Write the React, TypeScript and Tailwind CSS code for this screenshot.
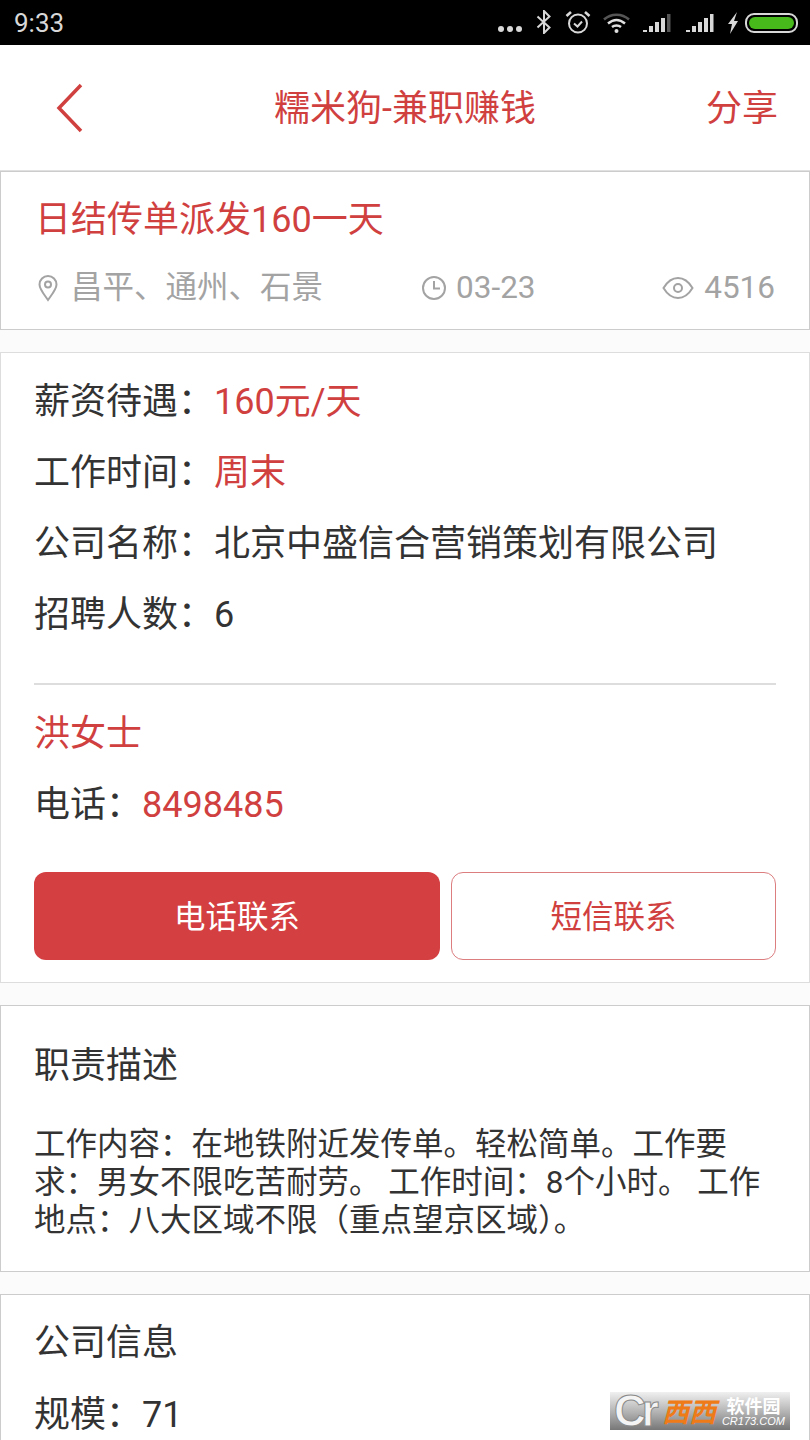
import React from "react";

function Row({ label, value, red }: { label: string; value: string; red?: boolean }) {
  return (
    <div className="h-[71px] flex items-center text-[36px] leading-none text-[#333333]">
      <span>{label}</span>
      <span className={red ? "text-[#d0403f]" : ""}>{value}</span>
    </div>
  );
}

function StatusIcons() {
  return (
    <div className="flex items-center text-white">
      <div className="flex gap-[3px] mt-[13px] mr-[14px]">
        <span className="w-[6px] h-[6px] rounded-full bg-[#d8d8d8]" />
        <span className="w-[6px] h-[6px] rounded-full bg-[#d8d8d8]" />
        <span className="w-[6px] h-[6px] rounded-full bg-[#d8d8d8]" />
      </div>
      <svg width="16" height="24" viewBox="0 0 16 24" fill="none" stroke="#d8d8d8" strokeWidth="2" className="mr-[13px] mt-[-1px]">
        <path d="M1.500 6.500l12 11L8 23V1l5.500 5.500-12 11" />
      </svg>
      <svg width="26" height="24" viewBox="0 0 26 24" fill="none" stroke="#d8d8d8" strokeWidth="2" className="mr-[12px] mt-[-1px]">
        <circle cx="13" cy="13.500" r="9" />
        <path d="M9 13.500l3.500 3 4.500-5" />
        <path d="M1.500 6L6 2M24.500 6L20 2" strokeWidth="2.600" />
      </svg>
      <svg width="27" height="20" viewBox="0 0 27 20" fill="none" className="mr-[13px]">
        <path d="M1 6.500C8 0 19 0 26 6.500" stroke="#555" strokeWidth="2.500" />
        <path d="M5 10.500C10.500 6 16.500 6 22 10.500" stroke="#e0e0e0" strokeWidth="2.500" />
        <path d="M9 14C11.500 12 15.500 12 18 14" stroke="#e0e0e0" strokeWidth="2.500" />
        <circle cx="13.500" cy="18" r="2" fill="#e0e0e0" />
      </svg>
      <svg width="28" height="20" viewBox="0 0 28 20" fill="#d8d8d8" className="mr-[15px]">
        <rect x="0" y="17" width="4" height="2" />
        <rect x="6" y="13" width="4" height="6" />
        <rect x="12" y="9" width="4" height="10" />
        <rect x="18" y="5" width="4" height="14" />
        <rect x="24" y="1" width="3.500" height="18" fill="#555" />
      </svg>
      <svg width="28" height="20" viewBox="0 0 28 20" fill="#d8d8d8" className="mr-[13px]">
        <rect x="0" y="17" width="4" height="2" />
        <rect x="6" y="13" width="4" height="6" />
        <rect x="12" y="9" width="4" height="10" />
        <rect x="18" y="5" width="4" height="14" />
        <rect x="24" y="1" width="3.500" height="18" />
      </svg>
      <svg width="12" height="22" viewBox="0 0 12 22" fill="#d8d8d8" className="mr-[6px]">
        <path d="M10 0L1 12h4L3 22l8-13H7z" />
      </svg>
      <div className="w-[53px] h-[20px] rounded-[9px] border-2 border-[#d8d8d8] p-[2px]">
        <div className="h-full rounded-[6px] bg-[#47b91a]" />
      </div>
    </div>
  );
}

function Watermark() {
  return (
    <div
      className="absolute right-[20px] bottom-[10px] w-[180px] h-[38px] flex items-center"
      style={{ background: "linear-gradient(#f0f0f0 0%, #b0b0b0 55%, #777777 100%)" }}
    >
      <span className="ml-[4px] text-[44px] leading-[38px] font-bold text-[#f4f4f4] [-webkit-text-stroke:1px_#8a8a8a] font-['Liberation_Sans',sans-serif] tracking-[-4px]">Cr</span>
      <span className="ml-[7px] text-[27px] leading-[32px] font-bold text-[#ee7a18] italic font-['Noto_Sans_CJK_SC',sans-serif]">西西</span>
      <div className="ml-[6px] flex flex-col items-center">
        <span className="text-[18px] leading-[18px] font-bold text-white font-['Noto_Sans_CJK_SC',sans-serif]">软件园</span>
        <span className="mt-[2px] text-[11px] leading-[11px] italic text-white font-['Liberation_Sans',sans-serif]">CR173.COM</span>
      </div>
    </div>
  );
}

export default function App() {
  return (
    <div className="relative w-[810px] h-[1440px] overflow-hidden bg-[#fbfbfb] font-['Roboto','Noto_Sans_CJK_SC',sans-serif]">
      <div className="h-[45px] bg-black flex items-center justify-between pl-[14px] pr-[12px]">
        <span className="text-[26px] leading-none text-[#d8d8d8]">9:33</span>
        <StatusIcons />
      </div>

      <div className="h-[126px] bg-white flex items-center justify-between pl-[56px] pr-[32px] border-b border-[#e0e0e0]">
        <svg width="28" height="50" viewBox="0 0 28 50" fill="none" stroke="#d0403f" strokeWidth="3.500">
          <path d="M25 2L3 25l22 23" />
        </svg>
        <span className="ml-[20px] text-[36px] leading-none pt-[2px] text-[#d0403f]">糯米狗-兼职赚钱</span>
        <span className="text-[36px] leading-none pt-[2px] text-[#d0403f]">分享</span>
      </div>

      <div className="h-[159px] bg-white border border-[#cccccc] pl-[34px] pr-[34px] pt-[25px]">
        <div className="text-[36px] leading-[46px] text-[#d0403f]">日结传单派发160一天</div>
        <div className="mt-[23px] flex items-center text-[31.500px] leading-[44px] text-[#a3a3a3]">
          <div className="flex items-center pl-[1px]">
            <svg width="24" height="28" viewBox="0 0 24 28" fill="none" stroke="#a3a3a3" strokeWidth="2" className="mr-[11px]">
              <path d="M12 26C7 19 3.500 15 3.500 10.500a8.500 8.500 0 0 1 17 0C20.500 15 17 19 12 26z" />
              <circle cx="12" cy="10.500" r="3" />
            </svg>
            <span>昌平、通州、石景</span>
          </div>
          <div className="flex items-center ml-[98px]">
            <svg width="26" height="26" viewBox="0 0 26 26" fill="none" stroke="#a3a3a3" strokeWidth="2" className="mr-[9px]">
              <circle cx="13" cy="13" r="11" />
              <path d="M13 6v7.500h6" />
            </svg>
            <span>03-23</span>
          </div>
          <div className="flex items-center ml-auto">
            <svg width="32" height="24" viewBox="0 0 32 24" fill="none" stroke="#a3a3a3" strokeWidth="2" className="mr-[10px]">
              <path d="M1.500 12C6 4.500 11 2 16 2s10 2.500 14.500 10C26 19.500 21 22 16 22S6 19.500 1.500 12z" />
              <circle cx="16" cy="12" r="4" />
            </svg>
            <span>4516</span>
          </div>
        </div>
      </div>

      <div className="mt-[22px] h-[631px] bg-white border border-[#dddddd] px-[33px] pt-[13px]">
        <Row label="薪资待遇：" value="160元/天" red />
        <Row label="工作时间：" value="周末" red />
        <Row label="公司名称：" value="北京中盛信合营销策划有限公司" />
        <Row label="招聘人数：" value="6" />
        <div className="mt-[33px] h-[2px] bg-[#dddddd]" />
        <div className="h-[95px] flex items-center pt-[2px] text-[36px] leading-none text-[#d0403f]">洪女士</div>
        <div className="h-[46px] mt-[2px] flex items-center text-[36px] leading-none text-[#333333]">
          <span>电话：</span>
          <span className="text-[#d0403f]">8498485</span>
        </div>
        <div className="mt-[44px] flex gap-[11px]">
          <button className="w-[406px] h-[88px] rounded-[12px] bg-[#d43f41] text-white text-[31.500px] leading-none pt-[3px]">电话联系</button>
          <button className="w-[325px] h-[88px] rounded-[12px] border border-[#dc7d7f] bg-white text-[#d0403f] text-[31.500px] leading-none pt-[3px]">短信联系</button>
        </div>
      </div>

      <div className="mt-[22px] h-[267px] bg-white border border-[#cccccc] px-[33px] pt-[37px]">
        <div className="text-[36px] leading-[46px] text-[#333333]">职责描述</div>
        <div className="mt-[37px] text-[31.500px] leading-[38px] text-[#333333] w-[740px]">
          工作内容：在地铁附近发传单。轻松简单。工作要求：男女不限吃苦耐劳。 工作时间：8个小时。 工作地点：八大区域不限（重点望京区域）。
        </div>
      </div>

      <div className="mt-[22px] h-[160px] bg-white border border-[#cccccc] px-[33px] pt-[25px]">
        <div className="text-[36px] leading-[46px] text-[#333333]">公司信息</div>
        <div className="mt-[26px] text-[36px] leading-[46px] text-[#333333]">规模：71</div>
      </div>

      <Watermark />
    </div>
  );
}
